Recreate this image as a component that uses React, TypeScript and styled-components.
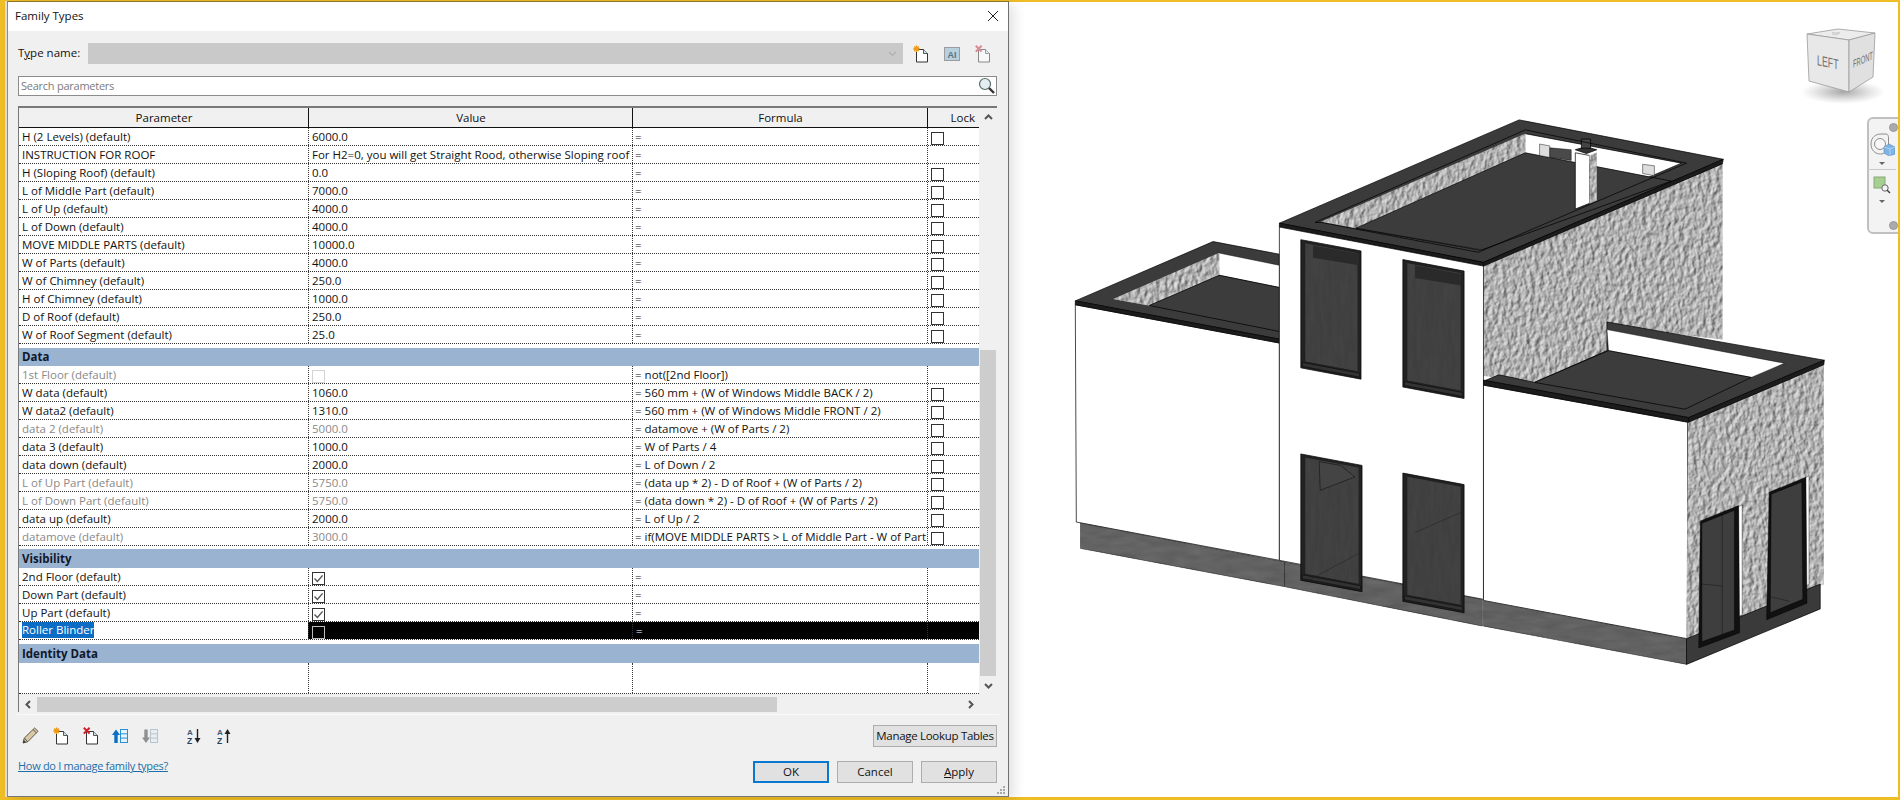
import React from "react";
import styled, { createGlobalStyle } from "styled-components";

const Global = createGlobalStyle`
  html, body { margin: 0; padding: 0; width: 1900px; height: 800px; overflow: hidden; }
  body { font-family: "Open Sans", "Noto Sans", "Liberation Sans", sans-serif; font-size: 11.5px; color: #111; }
`;

const Page = styled.div`
  width: 1900px; height: 800px; box-sizing: border-box;
  padding: 1px 2px 3px 5px;
  background: #efbd24;
  display: flex;
`;
const Dialog = styled.div`
  width: 1002px; margin-left: 2px; flex: none; box-sizing: border-box;
  background: #f0f0f0;
  border-top: 1px solid #8a7430;
  border-right: 1px solid #6f6f6f; border-bottom: 1px solid #777; border-left: 1px solid #8a8a8a;
  box-shadow: -2px 0 0 #ddd, 5px 3px 12px rgba(0,0,0,.12);
  display: flex; flex-direction: column; position: relative; z-index: 1;
`;
const TitleBar = styled.div`
  height: 29px; background: #fff; flex: none; box-sizing: border-box;
  display: flex; align-items: center; justify-content: space-between;
  padding: 0 9px 2px 7px; font-size: 11.5px;
`;
const Body = styled.div`
  flex: 1; display: flex; flex-direction: column; padding: 12px 11px 0 10px;
`;
const TypeRow = styled.div`
  display: flex; align-items: center; height: 21px;
`;
const TypeLabel = styled.span`
  width: 70px; flex: none; padding-bottom: 2px; u { text-underline-offset: 1px; }
`;
const Combo = styled.div`
  width: 815px; height: 21px; flex: none; background: #c9c9c9; border: none;
  display: flex; align-items: center; justify-content: flex-end; padding-right: 6px; box-sizing: border-box;
`;
const TypeIcons = styled.div`
  display: flex; margin-left: 10px; gap: 15px; align-items: center;
`;
const Search = styled.div`
  margin-top: 12px; height: 20px; box-sizing: border-box; width: 979px;
  border: 1px solid #8c8c8c; background: #fff; color: #7b7b7b;
  display: flex; align-items: center; justify-content: space-between; padding: 0 1px 1px 2px;
  font-size: 11px; letter-spacing: -0.25px;
`;
const Frame = styled.div`
  margin-top: 10px; width: 979px; border-top: 2px solid #787878; border-left: 1px solid #787878;
  box-sizing: border-box;
`;
const FrameTop = styled.div`display: flex;`;
const Grid = styled.div`
  width: 960px; background: #fff; flex: none;
`;
const Cols = "290px 324px 295px 51px";
const Header = styled.div`
  display: grid; grid-template-columns: ${Cols}; height: 19px;
  background: #f0f0f0; border-bottom: 1px solid #111; box-sizing: content-box;
`;
const HeadCell = styled.div<{ $lock?: boolean }>`
  display: flex; align-items: center; justify-content: ${p => (p.$lock ? "flex-end" : "center")};
  padding-right: ${p => (p.$lock ? "4px" : "0")};
  border-left: 1px solid #111; margin-left: -1px; font-size: 11.5px;
  &:first-child { border-left: none; margin-left: 0; }
`;
const Row = styled.div<{ $height?: number }>`
  display: grid; grid-template-columns: ${Cols}; height: ${p => p.$height ?? 18}px; box-sizing: border-box;
  border-bottom: 1px dotted #333;
`;
const Cell = styled.div<{ $dim?: boolean; $black?: boolean }>`
  display: flex; align-items: center; padding: 0 0 1px 3px; white-space: nowrap; overflow: hidden;
  border-left: 1px dotted #333; margin-left: -1px;
  color: ${p => (p.$black ? "#fff" : p.$dim ? "#8a8a8a" : "#111")};
  background: ${p => (p.$black ? "#000" : "transparent")};
  &:first-child { border-left: none; margin-left: 0; }
`;
const Formula = styled(Cell)`
  padding-left: 2px; color: #111;
`;
const Selected = styled.span`
  background: #0a6cc4; color: #fff; padding: 0 0 1px;
`;
const Band = styled.div<{ $gap: number; $h: number }>`
  margin-top: ${p => p.$gap}px; height: ${p => p.$h}px; background: #99b3d1; font-weight: 700; color: #10182a;
  display: flex; align-items: center; padding: 0 0 1px 3px; box-sizing: border-box;
`;
const Check = styled.span<{ $mode?: "dim" | "black" }>`
  width: 13px; height: 13px; box-sizing: border-box; flex: none; margin-top: 4px;
  border: 1px solid ${p => (p.$mode === "dim" ? "#d4d4d4" : p.$mode === "black" ? "#bdbdbd" : "#333")};
  background: ${p => (p.$mode === "black" ? "#000" : "#fff")};
  display: flex; align-items: center; justify-content: center;
`;
const VScroll = styled.div`
  width: 16px; margin-left: 1px; background: #f0f0f0; display: flex; flex-direction: column; align-items: center;
`;
const Arrow = styled.span`
  flex: none; height: 18px; display: flex; align-items: center; justify-content: center;
`;
const VTrack = styled.div`flex: 1; display: flex; flex-direction: column; width: 100%;`;
const VSpace = styled.div`height: 224px; flex: none;`;
const VThumb = styled.div`flex: 1; background: #cdcdcd;`;
const HScroll = styled.div`
  height: 15px; margin-top: 3px; width: 960px; display: flex; align-items: center; background: #f0f0f0;
`;
const HThumb = styled.div`
  width: 740px; height: 15px; background: #cdcdcd; flex: none;
`;
const HArrow = styled.span<{ $w: number }>`
  width: ${p => p.$w}px; flex: none; display: flex; align-items: center; justify-content: center;
`;
const HSpace = styled.div`flex: 1;`;
const Rule = styled.div`
  height: 1px; background: #fafafa; margin-top: 2px; width: 982px; margin-left: -1px;
`;
const Footer = styled.div`
  display: flex; justify-content: space-between; padding-top: 10px; width: 979px;
`;
const FootLeft = styled.div`display: flex; flex-direction: column;`;
const Tools = styled.div`display: flex; align-items: center; height: 21px; padding-left: 4px;`;
const Tool = styled.span<{ $w: number }>`
  width: ${p => p.$w}px; display: flex; justify-content: flex-start; flex: none;
`;
const Help = styled.a`
  margin-top: 12px; color: #1c6ea8; text-decoration: underline; font-size: 11px; letter-spacing: -0.3px; cursor: pointer;
`;
const FootRight = styled.div`
  display: flex; flex-direction: column; align-items: flex-end; gap: 14px;
`;
const Btn = styled.button<{ $primary?: boolean; $wide?: boolean }>`
  width: ${p => (p.$wide ? 124 : 76)}px; height: 22px; padding: 0 0 2px; box-sizing: border-box;
  font: inherit; font-size: 11.5px; color: #111; white-space: nowrap;
  letter-spacing: ${p => (p.$wide ? "-0.3px" : "0")};
  background: #e1e1e1; border: ${p => (p.$primary ? "2px solid #0b78d0" : "1px solid #adadad")};
`;
const BtnRow = styled.div`display: flex; gap: 8px;`;
const Grip = styled.svg`
  position: absolute; right: 2px; bottom: 1px;
`;

const Viewport = styled.div`
  flex: 1; margin-top: 1px; background: #fff; position: relative; overflow: hidden; padding: 98px 0 0 51px;
`;
const Cube = styled.svg`
  position: absolute; right: 13px; top: 24px;
`;
const NavBar = styled.div`
  position: absolute; right: -6px; top: 115px; width: 37px; height: 117px; box-sizing: border-box;
  background: #f3f3f3; border: 2px solid #c0c0c0; border-radius: 6px;
  display: flex; flex-direction: column; align-items: center; padding: 1px 7px 0 0;
`;
const NavDot = styled.span<{ $end?: boolean }>`
  width: 7px; height: 7px; border-radius: 50%; background: #aaa; border: 1px solid #999; align-self: flex-end;
  margin: ${p => (p.$end ? "auto -3px 2px 0" : "3px -3px 0 0")};
`;
const NavSplit = styled.div`
  width: 28px; height: 1px; background: #c9c9c9; margin: 4px 0 6px;
`;
const Caret = styled.span`
  width: 0; height: 0; border: 3px solid transparent; border-top: 3px solid #666; border-bottom: 0; margin-top: 6px;
`;

type P = { name: string; value?: string; formula?: string; lock?: boolean; dim?: boolean; check?: "on" | "off" | "dim" };
const G1: P[] = [
  { name: "H (2 Levels) (default)", value: "6000.0", lock: true },
  { name: "INSTRUCTION FOR ROOF", value: "For H2=0, you will get Straight Rood, otherwise Sloping roof" },
  { name: "H (Sloping Roof) (default)", value: "0.0", lock: true },
  { name: "L of Middle Part (default)", value: "7000.0", lock: true },
  { name: "L of Up (default)", value: "4000.0", lock: true },
  { name: "L of Down (default)", value: "4000.0", lock: true },
  { name: "MOVE MIDDLE PARTS (default)", value: "10000.0", lock: true },
  { name: "W of Parts (default)", value: "4000.0", lock: true },
  { name: "W of Chimney (default)", value: "250.0", lock: true },
  { name: "H of Chimney (default)", value: "1000.0", lock: true },
  { name: "D of Roof (default)", value: "250.0", lock: true },
  { name: "W of Roof Segment (default)", value: "25.0", lock: true },
];
const G2: P[] = [
  { name: "1st Floor (default)", check: "dim", formula: "not([2nd Floor])", dim: true },
  { name: "W data (default)", value: "1060.0", formula: "560 mm + (W of Windows Middle BACK / 2)", lock: true },
  { name: "W data2 (default)", value: "1310.0", formula: "560 mm + (W of Windows Middle FRONT / 2)", lock: true },
  { name: "data 2 (default)", value: "5000.0", formula: "datamove + (W of Parts / 2)", lock: true, dim: true },
  { name: "data 3 (default)", value: "1000.0", formula: "W of Parts / 4", lock: true },
  { name: "data down (default)", value: "2000.0", formula: "L of Down / 2", lock: true },
  { name: "L of Up Part (default)", value: "5750.0", formula: "(data up * 2) - D of Roof + (W of Parts / 2)", lock: true, dim: true },
  { name: "L of Down Part (default)", value: "5750.0", formula: "(data down * 2) - D of Roof + (W of Parts / 2)", lock: true, dim: true },
  { name: "data up (default)", value: "2000.0", formula: "L of Up / 2", lock: true },
  { name: "datamove (default)", value: "3000.0", formula: "if(MOVE MIDDLE PARTS > L of Middle Part - W of Part", lock: true, dim: true },
];
const G3: P[] = [
  { name: "2nd Floor (default)", check: "on" },
  { name: "Down Part (default)", check: "on" },
  { name: "Up Part (default)", check: "on" },
];

const Tick = () => (
  <svg width="11" height="11" viewBox="0 0 11 11"><path d="M1.5 5.5 4.4 8.4 9.6 2.4" fill="none" stroke="#555" strokeWidth="1.4" /></svg>
);

const ParamRow = ({ p }: { p: P }) => (
  <Row>
    <Cell $dim={p.dim}>{p.name}</Cell>
    <Cell $dim={p.dim}>
      {p.check ? <Check $mode={p.check === "dim" ? "dim" : undefined}>{p.check === "on" && <Tick />}</Check> : p.value}
    </Cell>
    <Formula>= {p.formula}</Formula>
    <Cell>{p.lock && <Check />}</Cell>
  </Row>
);

const Chevron = ({ dir, light }: { dir: "up" | "down" | "left" | "right"; light?: boolean }) => {
  const d = { up: "M1 6 4.5 2.5 8 6", down: "M1 3 4.5 6.5 8 3", left: "M6 1 2.5 4.5 6 8", right: "M3 1 6.5 4.5 3 8" }[dir];
  return <svg width="9" height="9" viewBox="0 0 9 9"><path d={d} fill="none" stroke={light ? "#b0b0b0" : "#555"} strokeWidth={light ? 1.2 : 2} /></svg>;
};

const Doc = ({ ink }: { ink: string }) => (
  <>
    <path d="M3.500 4.500h7l4 4v8.500h-11z" fill="#fff" stroke={ink} strokeWidth="1" />
    <path d="M10.500 4.500v4h4" fill="#cfe2ea" stroke={ink} strokeWidth="0.8" />
  </>
);
const NewDoc = () => (
  <svg width="16" height="18" viewBox="0 0 16 18">
    <Doc ink="#333" />
    <g stroke="#ee9a18" strokeWidth="1.4"><path d="M3.500 0.500v6.500M0.300 3.800H6.700M1.200 1.500l4.600 4.600M5.800 1.500 1.200 6.100" /></g>
  </svg>
);
const DelDoc = ({ faded }: { faded?: boolean }) => (
  <svg width="16" height="18" viewBox="0 0 16 18">
    <g opacity={faded ? 0.55 : 1}><Doc ink="#333" /></g>
    <path d="M0.800 0.800l5.800 5.800M6.600 0.800 0.800 6.600" stroke={faded ? "#d98a90" : "#d0202c"} strokeWidth="2" />
  </svg>
);
const Rename = () => (
  <svg width="16" height="14" viewBox="0 0 16 14">
    <rect x="0.500" y="0.500" width="15" height="13" fill="#b8d0de" stroke="#9a9ea2" />
    <text x="8" y="10.500" textAnchor="middle" fontSize="9" fontWeight="700" fill="#5a7484" fontFamily="Liberation Sans, sans-serif">AI</text>
  </svg>
);
const Pencil = () => (
  <svg width="17" height="17" viewBox="0 0 17 17">
    <path d="M1 16 2.300 11 12.600 1l3.400 3.300L5.700 14.800z" fill="#d9c9a4" stroke="#5c574c" strokeWidth="1" />
    <path d="M2.300 11 5.700 14.800M11 2.600l3.400 3.300" stroke="#5c574c" strokeWidth="1" fill="none" />
    <path d="M1 16 1.800 13 3.900 15z" fill="#333" />
  </svg>
);
const MoveParam = ({ up }: { up?: boolean }) => {
  const line = up ? "#2a8fd4" : "#b8c4cc";
  const fill = up ? "#e6f3fb" : "#e8eef2";
  return (
    <svg width="16" height="16" viewBox="0 0 16 16">
      <rect x="8.500" y="1.500" width="7" height="13" fill={fill} stroke={line} />
      <path d="M8.500 5.800h7M8.500 10.100h7" fill="none" stroke={line} />
      <path d={up ? "M4 1.500 8 7H5.700v8H2.300V7H0z" : "M4 15 8 9.500H5.700V1.500H2.300v8H0z"} fill={up ? "#0a6fc2" : "#909090"} />
    </svg>
  );
};
const Sort = ({ up }: { up?: boolean }) => (
  <svg width="14" height="16" viewBox="0 0 14 16">
    <text x="0" y="7" fontSize="8" fontWeight="700" fill="#3c5c78" fontFamily="Liberation Sans, sans-serif">A</text>
    <text x="0" y="15.500" fontSize="8.500" fontWeight="700" fill="#26445e" fontFamily="Liberation Sans, sans-serif">Z</text>
    <path d={up ? "M10.500 1 13.500 6H11.200V15H9.800V6H7.500z" : "M10.500 15 13.500 10H11.200V1H9.800V10H7.500z"} fill="#222" />
  </svg>
);

/* ------- the 3D model. Coordinates come from a squeezed crop, so x and y scale differently. ------- */
const Poly = ({ pts, fill = "#3b3b3b", stroke = "#000", tex, sw = 1.6 }: { pts: string; fill?: string; stroke?: string; tex?: string; sw?: number }) => (
  <polygon points={pts} fill={fill} stroke={stroke} strokeWidth={sw} filter={tex ? `url(#${tex})` : undefined} />
);
const WinFrame = ({ x, y, w, h, s }: { x: number; y: number; w: number; h: number; s: number }) => {
  const q = (dx: number, dy: number, dw: number, dh: number) =>
    `${x + dx},${y + dy} ${x + dx + dw},${y + dy + dw * s} ${x + dx + dw},${y + dy + dh + dw * s} ${x + dx},${y + dy + dh}`;
  return (
    <>
      <Poly pts={q(0, 0, w, h)} fill="#222" />
      <Poly pts={q(8, 8, w - 14, h - 24)} fill="#454545" tex="glass" sw={1} />
      <Poly pts={q(3, h - 14, w - 6, 10)} fill="#333" sw={1} />
    </>
  );
};

const House = () => (
  <svg width="800" height="600" viewBox="0 0 1568 1568" preserveAspectRatio="none">
    <defs>
      <filter id="stucco" x="0" y="0" width="100%" height="100%" colorInterpolationFilters="sRGB">
        <feTurbulence type="fractalNoise" baseFrequency="0.11 0.06" numOctaves="5" seed="11" result="n" />
        <feDiffuseLighting in="n" surfaceScale="3" diffuseConstant="1" lightingColor="#e6e6e6" result="l">
          <feDistantLight azimuth="215" elevation="52" />
        </feDiffuseLighting>
        <feComposite in="l" in2="SourceAlpha" operator="in" />
      </filter>
      <filter id="glass" x="0" y="0" width="100%" height="100%" colorInterpolationFilters="sRGB">
        <feTurbulence type="fractalNoise" baseFrequency="0.12 0.015" numOctaves="3" seed="4" result="n" />
        <feColorMatrix in="n" type="matrix" values="0 0 0 0 .2  0 0 0 0 .2  0 0 0 0 .2  .5 0 0 0 .0" result="c" />
        <feMerge result="m"><feMergeNode in="SourceGraphic" /><feMergeNode in="c" /></feMerge>
        <feComposite in="m" in2="SourceAlpha" operator="in" />
      </filter>
      <filter id="base" x="0" y="0" width="100%" height="100%" colorInterpolationFilters="sRGB">
        <feTurbulence type="fractalNoise" baseFrequency="0.02 0.06" numOctaves="3" seed="9" result="n" />
        <feColorMatrix in="n" type="matrix" values="0 0 0 0 .5  0 0 0 0 .5  0 0 0 0 .5  .55 0 0 0 0" result="c" />
        <feMerge result="m"><feMergeNode in="SourceGraphic" /><feMergeNode in="c" /></feMerge>
        <feComposite in="m" in2="SourceAlpha" operator="in" />
      </filter>
    </defs>

    {/* middle block, rear and side */}
    <Poly pts="830,430 1298,165 1298,625 1072,590 1072,655 930,738 830,720" fill="#bbb" tex="stucco" />
    <Poly pts="430,322 900,52 1300,155 830,425" />
    <Poly pts="512,318 912,88 1218,165 822,392" fill="#fff" />
    <Poly pts="512,318 912,88 912,138 580,335" fill="#bbb" tex="stucco" sw={1} />
    <Poly pts="580,335 912,138 1198,212 826,392" fill="#3c3c3c" />
    <Poly pts="940,115 960,120 960,150 940,145" fill="#ddd" sw={1} />
    <Poly pts="960,125 1002,130 1002,158 960,150" fill="#4a4a4a" sw={1} />
    <Poly pts="1142,168 1165,172 1165,198 1142,192" fill="#ddd" sw={1} />
    <Poly pts="1010,138 1038,145 1038,270 1010,285" fill="#fff" />
    <Poly pts="1038,145 1052,138 1052,262 1038,270" fill="#aaa" tex="stucco" sw={1} />
    <Poly pts="1010,130 1030,122 1052,130 1032,140" fill="#333" />
    <Poly pts="1022,102 1040,102 1040,126 1022,126" fill="#444" />
    <Poly pts="430,322 830,424 830,434 430,332" fill="#1c1c1c" />
    <Poly pts="830,424 1300,155 1298,167 830,434" fill="#1c1c1c" />
    <Poly pts="500,320 912,78 1228,165 820,398 512,320" fill="none" sw={1.6} />

    {/* left block */}
    <Poly pts="30,535 430,635 430,1203 32,1103" fill="#fff" />
    <Poly pts="40,1105 440,1207 440,1272 40,1172" fill="#585858" tex="base" />
    <Poly pts="30,525 300,370 430,403 430,625" />
    <Poly pts="105,520 312,400 430,432 430,490 312,458 175,537" fill="#fff" sw={1} />
    <Poly pts="105,520 312,400 312,458 175,537" fill="#bbb" tex="stucco" sw={1} />
    <Poly pts="175,537 312,458 430,490 430,605" fill="#3c3c3c" />
    <Poly pts="30,525 430,625 430,635 30,535" fill="#1c1c1c" />

    {/* middle front */}
    <Poly pts="430,332 830,434 830,1305 430,1203" fill="#fff" />
    <Poly pts="440,1207 828,1305 828,1375 440,1272" fill="#555" tex="base" />
    <WinFrame x={472} y={365} w={118} h={335} s={0.25} />
    <Poly pts="496,380 586,402 586,432 496,412" fill="#2a2a2a" sw={0} />
    <WinFrame x={672} y={417} w={120} h={333} s={0.25} />
    <Poly pts="696,432 786,455 786,485 696,465" fill="#2a2a2a" sw={0} />
    <WinFrame x={472} y={925} w={120} h={330} s={0.25} />
    <Poly pts="508,945 550,955 578,985 510,1020" fill="#444" sw={1} />
    <WinFrame x={672} y={975} w={120} h={335} s={0.25} />
    <path d="M696 1130 786 1078M480 1260 586 1185" stroke="#1a1a1a" strokeWidth="1" fill="none" />

    {/* right block */}
    <Poly pts="830,745 1230,842 1230,1408 830,1308" fill="#fff" />
    <Poly pts="830,1308 1228,1408 1228,1475 830,1375" fill="#565656" tex="base" />
    <Poly pts="1232,842 1497,690 1497,1265 1228,1408" fill="#bbb" tex="stucco" />
    <Poly pts="1228,1408 1490,1265 1490,1330 1228,1475" fill="#3a3a3a" />
    <Poly pts="1072,595 1072,580 1498,680 1232,830 830,735 860,718 930,738 1072,655" />
    <Poly pts="1072,600 1420,688 1355,725 1075,655" fill="#fff" sw={1} />
    <Poly pts="930,738 1075,655 1355,725 1225,808" fill="#3c3c3c" />
    <Poly pts="830,732 1232,830 1232,842 830,745" fill="#1c1c1c" />
    <Poly pts="1232,830 1498,680 1497,692 1232,842" fill="#1c1c1c" />
    {/* side doors: dark opening, black jamb and a white reveal on the far side only */}
    <Poly pts="1330,1063 1337,1058 1337,1345 1330,1350" fill="#fff" sw={0.8} />
    <Poly pts="1255,1100 1330,1060 1332,1392 1252,1432" fill="#111" sw={1} />
    <Poly pts="1258,1106 1322,1072 1322,1385 1258,1416" fill="#3e3e3e" sw={1} />
    <path d="M1298 1085V1398M1258 1265 1298 1270" stroke="#111" strokeWidth="1" fill="none" />
    <Poly pts="1460,988 1468,982 1468,1266 1460,1270" fill="#fff" sw={0.8} />
    <Poly pts="1390,1025 1462,986 1464,1315 1385,1358" fill="#111" sw={1} />
    <Poly pts="1394,1030 1454,998 1456,1305 1392,1340" fill="#3e3e3e" sw={1} />
    <path d="M1392 1298 1430 1310" stroke="#111" strokeWidth="1" fill="none" />
  </svg>
);

export default function App() {
  return (
    <Page>
      <Global />
      <Dialog>
        <TitleBar>
          <span>Family Types</span>
          <svg width="12" height="12" viewBox="0 0 12 12"><path d="M1 1l10 10M11 1 1 11" stroke="#222" strokeWidth="1" /></svg>
        </TitleBar>
        <Body>
          <TypeRow>
            <TypeLabel>T<u>y</u>pe name:</TypeLabel>
            <Combo><Chevron dir="down" light /></Combo>
            <TypeIcons><NewDoc /><Rename /><DelDoc faded /></TypeIcons>
          </TypeRow>
          <Search>
            <span>Search parameters</span>
            <svg width="17" height="17" viewBox="0 0 17 17">
              <circle cx="7" cy="7" r="5.500" fill="#e3eef0" stroke="#5a6a6c" strokeWidth="1.2" />
              <path d="M11 11 16 16" stroke="#333" strokeWidth="2.400" />
            </svg>
          </Search>
          <Frame>
            <FrameTop>
              <Grid>
                <Header>
                  <HeadCell>Parameter</HeadCell>
                  <HeadCell>Value</HeadCell>
                  <HeadCell>Formula</HeadCell>
                  <HeadCell $lock>Lock</HeadCell>
                </Header>
                {G1.map(p => <ParamRow key={p.name} p={p} />)}
                <Band $gap={4} $h={18}>Data</Band>
                {G2.map(p => <ParamRow key={p.name} p={p} />)}
                <Band $gap={3} $h={19}>Visibility</Band>
                {G3.map(p => <ParamRow key={p.name} p={p} />)}
                <Row>
                  <Cell><Selected>Roller Blinder</Selected></Cell>
                  <Cell $black><Check $mode="black" /></Cell>
                  <Cell $black>=</Cell>
                  <Cell $black />
                </Row>
                <Band $gap={4} $h={19}>Identity Data</Band>
                <Row $height={31}><Cell /><Cell /><Cell /><Cell /></Row>
              </Grid>
              <VScroll>
                <Arrow><Chevron dir="up" /></Arrow>
                <VTrack>
                  <VSpace />
                  <VThumb />
                </VTrack>
                <Arrow><Chevron dir="down" /></Arrow>
              </VScroll>
            </FrameTop>
            <HScroll>
              <HArrow $w={18}><Chevron dir="left" /></HArrow>
              <HThumb />
              <HSpace />
              <HArrow $w={18}><Chevron dir="right" /></HArrow>
            </HScroll>
          </Frame>
          <Rule />
          <Footer>
            <FootLeft>
              <Tools>
                <Tool $w={31}><Pencil /></Tool>
                <Tool $w={30}><NewDoc /></Tool>
                <Tool $w={29}><DelDoc /></Tool>
                <Tool $w={30}><MoveParam up /></Tool>
                <Tool $w={45}><MoveParam /></Tool>
                <Tool $w={30}><Sort /></Tool>
                <Tool $w={16}><Sort up /></Tool>
              </Tools>
              <Help>How do I manage family types?</Help>
            </FootLeft>
            <FootRight>
              <Btn $wide>Mana<u>g</u>e Lookup Tables</Btn>
              <BtnRow>
                <Btn $primary>OK</Btn>
                <Btn>Cancel</Btn>
                <Btn><u>A</u>pply</Btn>
              </BtnRow>
            </FootRight>
          </Footer>
        </Body>
        <Grip width="9" height="9" viewBox="0 0 9 9">
          <g fill="#a8a8a8"><rect x="6" y="0" width="2" height="2" /><rect x="3" y="3" width="2" height="2" /><rect x="6" y="3" width="2" height="2" /><rect x="0" y="6" width="2" height="2" /><rect x="3" y="6" width="2" height="2" /><rect x="6" y="6" width="2" height="2" /></g>
        </Grip>
      </Dialog>
      <Viewport>
        <House />
        <Cube width="90" height="80" viewBox="0 0 90 80">
          <defs>
            <radialGradient id="cubeShadow"><stop offset="0" stopColor="#777" stopOpacity=".65" /><stop offset="1" stopColor="#999" stopOpacity="0" /></radialGradient>
          </defs>
          <ellipse cx="48" cy="66" rx="42" ry="12" fill="url(#cubeShadow)" />
          <polygon points="12,8 43,3 80,7 54,14" fill="#ececec" stroke="#9a9a9a" strokeWidth="0.8" />
          <polygon points="12,8 54,14 54,66 14,55" fill="#e8e8e8" stroke="#9a9a9a" strokeWidth="0.8" />
          <polygon points="54,14 80,7 78,51 54,66" fill="#e0e0e0" stroke="#9a9a9a" strokeWidth="0.8" />
          <text x="0" y="0" fontSize="11" fontFamily="Liberation Sans, sans-serif" fill="#6f6f6f" transform="translate(22 39) skewY(12) scale(0.8 1.3)">LEFT</text>
          <text x="0" y="0" fontSize="8" fontFamily="Liberation Sans, sans-serif" fill="#6f6f6f" transform="translate(58 42) skewY(-24) scale(0.72 1.4)">FRONT</text>
          <text x="0" y="0" fontSize="4" fontFamily="Liberation Sans, sans-serif" fill="#999" transform="translate(36 9) skewX(-20)">TOP</text>
        </Cube>
        <NavBar>
          <NavDot />
          <svg width="26" height="24" viewBox="0 0 26 24">
            <path d="M2 12C2 5 7 2 12 2h5c2 0 2.500 2 2.500 4v8c0 5-4 8-8 8C6 22 2 18 2 12z" fill="#f3f3f3" stroke="#8e8e8e" strokeWidth="1" />
            <circle cx="11" cy="12" r="5.500" fill="#f7f7f7" stroke="#8e8e8e" strokeWidth="1" />
            <path d="M15 15l5-3 6 3v7l-6 2-5-3z" fill="#7fb4e6" stroke="#5589bb" strokeWidth="0.6" />
            <path d="M15 15l6 2 5-2M21 17v7" fill="none" stroke="#cfe3f6" strokeWidth="0.6" />
          </svg>
          <Caret />
          <NavSplit />
          <svg width="18" height="18" viewBox="0 0 18 18">
            <rect x="1" y="1" width="11" height="11" fill="#a6cf92" stroke="#8aa87a" strokeWidth="1" />
            <circle cx="12" cy="12" r="3.200" fill="#f3f3f3" stroke="#666" strokeWidth="1" />
            <path d="M14 14l3 3" stroke="#444" strokeWidth="1.500" />
          </svg>
          <Caret />
          <NavDot $end />
        </NavBar>
      </Viewport>
    </Page>
  );
}
